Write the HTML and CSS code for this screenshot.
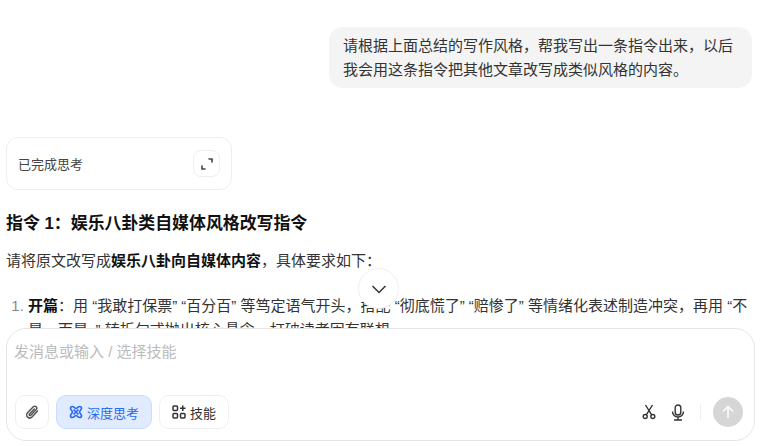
FILE: index.html
```html
<!DOCTYPE html>
<html lang="zh-CN">
<head>
    <meta charset="UTF-8">
    <title>对话</title>
    <link rel="stylesheet" href="styles.css">
</head>
<body>
    <div class="chat">
        <div class="user-row">
            <div class="bubble">请根据上面总结的写作风格，帮我写出一条指令出来，以后我会用这条指令把其他文章改写成类似风格的内容。</div>
        </div>
        <div class="think-card">
            <span>已完成思考</span>
            <button class="expand-btn" type="button">
                <svg width="14" height="14" viewBox="0 0 14 14" fill="none" stroke="#444" stroke-width="1.6">
                    <path d="M8.500 2H12V5.500"/>
                    <path d="M5.500 12H2V8.500"/>
                </svg>
            </button>
        </div>
        <h3 class="answer-title">指令 1：娱乐八卦类自媒体风格改写指令</h3>
        <p class="answer-text">请将原文改写成<b>娱乐八卦向自媒体内容</b>，具体要求如下：</p>
        <ol class="answer-list">
            <li><b>开篇</b>：用 “我敢打保票” “百分百” 等笃定语气开头，搭配 “彻底慌了” “赔惨了” 等情绪化表述制造冲突，再用 “不是，而是，” 转折句式抛出核心悬念，打破读者固有联想</li>
        </ol>
    </div>

    <button class="scroll-btn" type="button">
        <svg width="18" height="18" viewBox="0 0 18 18" fill="none" stroke="#333" stroke-width="1.5">
            <path d="M2.500 6 9 12.500 15.500 6"/>
        </svg>
    </button>

    <div class="composer">
        <div class="placeholder">发消息或输入 / 选择技能</div>
        <div class="toolbar">
            <div class="tools-left">
                <button class="tool-btn square" type="button">
                    <svg width="16" height="16" viewBox="0 0 16 16" fill="none" stroke="#555" stroke-width="1.500" stroke-linecap="round">
                        <path d="M13.500 7 8 13a3 3 0 0 1-4.500-4.200L9.300 2.800a2 2 0 0 1 2.900 2.800L6.800 11.200a.9.9 0 0 1-1.400-1.300L10.300 5"/>
                    </svg>
                </button>
                <button class="tool-btn active" type="button">
                    <svg width="14" height="14" viewBox="0 0 14 14" fill="none" stroke="#2b6cf0" stroke-width="1.700">
                        <path d="M3.300 1.500C5 1.500 5.800 3.500 7 3.500S9 1.500 10.700 1.500C12 1.500 12.500 2.500 12.500 3.300 12.500 5 10.500 5.800 10.500 7S12.500 9 12.500 10.700C12.500 11.800 11.800 12.500 10.700 12.500 9 12.500 8.200 10.500 7 10.500S5 12.500 3.300 12.500C2.200 12.500 1.500 11.800 1.500 10.700 1.500 9 3.500 8.200 3.500 7S1.500 5 1.500 3.300C1.500 2.200 2.200 1.500 3.300 1.500Z"/>
                        <path d="M4.500 4.500 9.500 9.500M9.500 4.500 4.500 9.500"/>
                    </svg>
                    深度思考
                </button>
                <button class="tool-btn" type="button">
                    <svg width="14" height="14" viewBox="0 0 14 14" fill="none" stroke="#333" stroke-width="1.500">
                        <rect x="1" y="1" width="4.500" height="4.500" rx="1"/>
                        <rect x="1" y="8.500" width="4.500" height="4.500" rx="1"/>
                        <rect x="8.500" y="8.500" width="4.500" height="4.500" rx="1"/>
                        <path d="M10.750 .5v5.500M8 3.250h5.500"/>
                    </svg>
                    技能
                </button>
            </div>
            <div class="tools-right">
                <svg width="14" height="16" viewBox="0 0 14 16" fill="none" stroke="#333" stroke-width="1.400">
                    <circle cx="3.200" cy="12.500" r="2"/>
                    <circle cx="10.800" cy="12.500" r="2"/>
                    <path d="M4.300 10.800 10.500 1M9.700 10.800 3.500 1"/>
                </svg>
                <svg width="14" height="17" viewBox="0 0 14 17" fill="none" stroke="#333" stroke-width="1.400">
                    <rect x="4.200" y="1" width="5.600" height="10" rx="2.800"/>
                    <path d="M1.500 7.500a5.500 5.500 0 0 0 11 0M7 13v3M3 16h8"/>
                </svg>
                <span class="divider"></span>
                <button class="send-btn" type="button">
                    <svg width="14" height="14" viewBox="0 0 14 14" fill="none" stroke="#fff" stroke-width="1.500">
                        <path d="M7 13V1.500M2 6.500l5-5 5 5"/>
                    </svg>
                </button>
            </div>
        </div>
    </div>
</body>
</html>
```

FILE: styles.css
```css
html, body {
    margin: 0;
    padding: 0;
    height: 446px;
    overflow: hidden;
}
body {
    position: relative;
    background: #fff;
    color: #333;
    font-family: "Liberation Sans", "Noto Sans CJK SC", sans-serif;
    font-size: 15px;
}
button {
    font-family: inherit;
    padding: 0;
    cursor: pointer;
}
.chat {
    padding: 27px 19px 0 6px;
}
.user-row {
    display: flex;
    justify-content: flex-end;
}
.bubble {
    box-sizing: border-box;
    width: 423px;
    padding: 7px 14px;
    background: #f4f4f4;
    border-radius: 14px;
    font-size: 15px;
    line-height: 23.500px;
    color: #333;
}
.think-card {
    box-sizing: border-box;
    display: flex;
    justify-content: space-between;
    align-items: center;
    width: 226px;
    height: 53px;
    margin-top: 49px;
    padding: 0 11px 0 11px;
    border: 1px solid #eee;
    border-radius: 12px;
    font-size: 13px;
    color: #444;
}
.expand-btn {
    display: flex;
    align-items: center;
    justify-content: center;
    width: 27px;
    height: 27px;
    background: #fff;
    border: 1px solid #eee;
    border-radius: 8px;
}
.answer-title {
    margin: 21px 0 0;
    font-size: 16.900px;
    line-height: 26px;
    font-weight: 700;
    color: #111;
}
.answer-text {
    margin: 12px 0 0;
    line-height: 24px;
}
.answer-text b, .answer-list b {
    color: #111;
}
.answer-list {
    margin: 21px 0 0;
    padding: 0 0 0 22px;
    line-height: 24px;
}
.answer-list li::marker {
    color: #888;
}
.scroll-btn {
    position: absolute;
    left: 358px;
    top: 268px;
    display: flex;
    align-items: center;
    justify-content: center;
    width: 41px;
    height: 41px;
    background: #fff;
    border: 1px solid #eee;
    border-radius: 50%;
}
.composer {
    position: absolute;
    left: 6px;
    top: 328px;
    box-sizing: border-box;
    display: flex;
    flex-direction: column;
    justify-content: space-between;
    width: 749px;
    height: 113px;
    padding: 13px 11px 11px 7px;
    background: #fff;
    border: 1px solid #e6e6e6;
    border-radius: 20px;
}
.placeholder {
    font-size: 15px;
    line-height: 20px;
    color: #bbb;
}
.toolbar {
    display: flex;
    justify-content: space-between;
    align-items: center;
}
.tools-left {
    display: flex;
    gap: 7px;
    margin-left: 1px;
}
.tool-btn {
    box-sizing: border-box;
    display: flex;
    align-items: center;
    gap: 4px;
    height: 34px;
    padding: 0 12px;
    background: #fff;
    border: 1px solid #eee;
    border-radius: 10px;
    font-size: 13px;
    color: #333;
}
.tool-btn.square {
    justify-content: center;
    width: 34px;
    padding: 0;
}
.tool-btn.active {
    background: #e0ebff;
    border-color: #c9dcfb;
    color: #2b6cf0;
}
.tools-right {
    display: flex;
    align-items: center;
    gap: 15px;
}
.divider {
    width: 1px;
    height: 16px;
    margin-right: -3px;
    background: #eee;
}
.send-btn {
    display: flex;
    align-items: center;
    justify-content: center;
    width: 30px;
    height: 30px;
    background: #d6d6d6;
    border: none;
    border-radius: 50%;
}
```
